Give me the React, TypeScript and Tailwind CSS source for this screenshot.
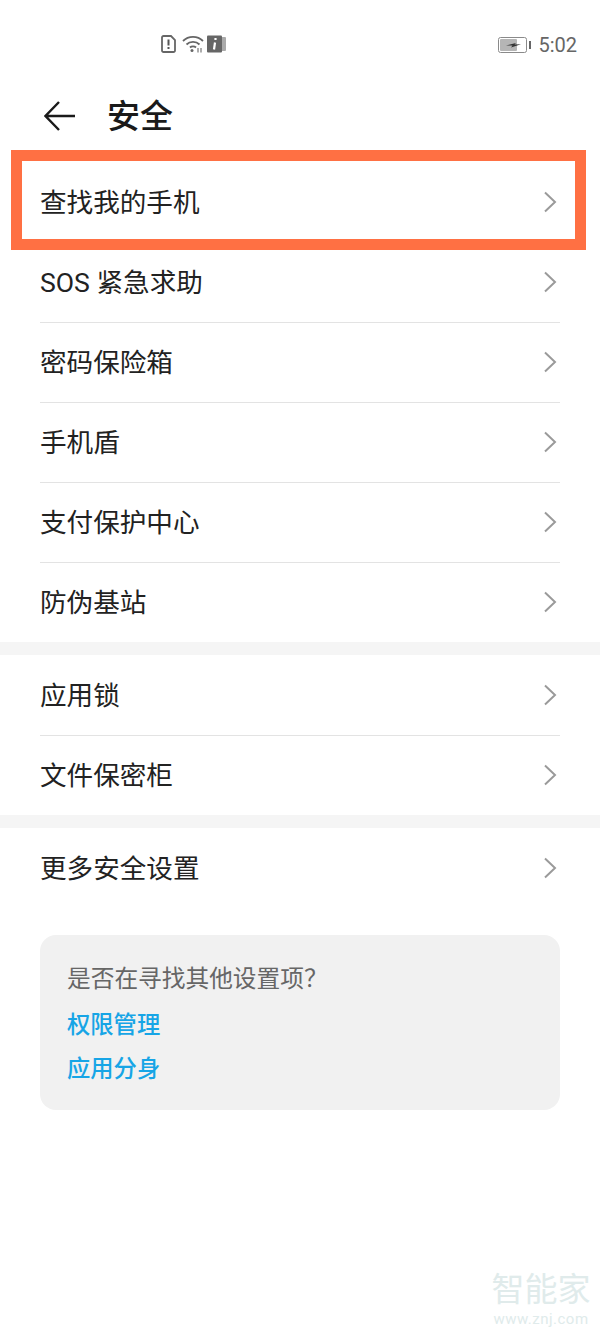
const FONT = "font-['Roboto','Noto_Sans_CJK_SC',sans-serif]";

function Row({ label, divider = false }: { label: string; divider?: boolean }) {
  return (
    <div className="px-10">
      <div
        className={`flex h-20 items-center justify-between ${
          divider ? "shadow-[inset_0_1px_0_#e3e3e3]" : ""
        }`}
      >
        <span className="pt-[3px] text-[26.6px] leading-none text-[#222]">{label}</span>
        <svg width="14" height="22" viewBox="0 0 14 22" fill="none" className="mr-[3px]">
          <path d="M2 1.5 L12 11 L2 20.5" stroke="#9a9a9a" strokeWidth="2" />
        </svg>
      </div>
    </div>
  );
}

function StatusBar() {
  return (
    <div className="flex h-[88px] items-start justify-between pt-[33px] pr-[23px] pl-[161px]">
      <div className="mt-[2px] flex items-center gap-[6px]">
        {/* sim alert */}
        <svg width="15" height="18" viewBox="0 0 15 18" fill="none">
          <path d="M1 2.5 A1.5 1.5 0 0 1 2.5 1 H10 L14 5 V15.5 A1.5 1.5 0 0 1 12.5 17 H2.5 A1.5 1.5 0 0 1 1 15.5 Z" stroke="#666" strokeWidth="1.8" />
          <path d="M7.5 4.5 V10.5 M7.5 12 V14" stroke="#555" strokeWidth="2" />
        </svg>
        {/* wifi */}
        <svg width="22" height="18" viewBox="0 0 22 18" fill="none">
          <path d="M1 6 C6.5 0.5 15.5 0.5 21 6" stroke="#666" strokeWidth="1.8" />
          <path d="M4.5 9.5 C8 6 14 6 17.5 9.5" stroke="#666" strokeWidth="1.8" />
          <path d="M8 12.5 C9.5 11 12.5 11 14 12.5" stroke="#666" strokeWidth="1.8" />
          <circle cx="10" cy="15.5" r="1.5" fill="#666" />
          <path d="M16 13 V17.5 M19 13 V17.5" stroke="#777" strokeWidth="1.2" />
        </svg>
        {/* info sim */}
        <svg width="19" height="18" viewBox="0 0 19 18" fill="none" className="-ml-[3px]">
          <rect x="14" y="2" width="5" height="14" rx="1" fill="#aaa" />
          <rect x="0" y="0.5" width="15" height="17" rx="1" fill="#666" />
          <path d="M8.5 3 V5 M8 7.5 L7 14.5" stroke="#fff" strokeWidth="2.2" />
        </svg>
      </div>
      <div className="flex items-center gap-[7px]">
        <svg width="33" height="16" viewBox="0 0 33 16" fill="none">
          <rect x="0.5" y="0.5" width="28" height="15" rx="2" fill="#fff" stroke="#8a8a8a" />
          <rect x="2" y="2" width="17" height="12" rx="1" fill="#b5b5b5" />
          <path d="M8 8.5 L18 6 L16.5 7.6 L23 7.2 L13 10.5 L14.5 8.6 Z" fill="#333" />
          <rect x="31" y="4" width="2" height="8" fill="#666" />
        </svg>
        <span className="text-[20px] leading-6 text-[#666]">5:02</span>
      </div>
    </div>
  );
}

export default function App() {
  return (
    <div className={`relative h-[1333px] w-[600px] overflow-hidden bg-white ${FONT}`}>
      <StatusBar />

      {/* Header */}
      <div className="flex h-[74px] items-start pt-[8px] pl-[44px]">
        <svg width="32" height="30" viewBox="0 0 32 30" fill="none" className="mt-[5px]">
          <path d="M15 1 L1.5 15 L15 29 M1.5 15 H31" stroke="#1a1a1a" strokeWidth="2.4" />
        </svg>
        <span className="ml-[31px] pt-[1px] text-[33px] leading-[40px] font-medium text-[#1a1a1a]">安全</span>
      </div>

      <Row label="查找我的手机" />
      <Row label="SOS 紧急求助" divider />
      <Row label="密码保险箱" divider />
      <Row label="手机盾" divider />
      <Row label="支付保护中心" divider />
      <Row label="防伪基站" divider />

      <div className="h-[13px] bg-[#f5f5f5]" />

      <Row label="应用锁" />
      <Row label="文件保密柜" divider />

      <div className="h-[13px] bg-[#f5f5f5]" />

      <Row label="更多安全设置" />

      {/* Suggestions card */}
      <div className="mx-10 mt-[27px] flex h-[175px] flex-col rounded-[16px] bg-[#f1f1f1] px-[27px] pt-[29px]">
        <span className="text-[23.7px] leading-[30px] text-[#666]">是否在寻找其他设置项？</span>
        <span className="mt-[16px] text-[23.3px] leading-[30px] font-medium text-[#17a5e6]">权限管理</span>
        <span className="mt-[14px] text-[23.3px] leading-[30px] font-medium text-[#17a5e6]">应用分身</span>
      </div>

      {/* Highlight frame */}
      <div className="absolute top-[150px] left-[11px] h-[100px] w-[575px] border-[11px] border-[#ff7043]" />

      {/* Watermark */}
      <div className="absolute top-[1270px] left-[489px] flex w-[104px] flex-col items-center text-[#e0ebeb]">
        <span className="text-[33px] leading-[40px]">智能家</span>
        <span className="text-[15px] leading-[18px] tracking-[0.5px]">www.znj.com</span>
      </div>
    </div>
  );
}
